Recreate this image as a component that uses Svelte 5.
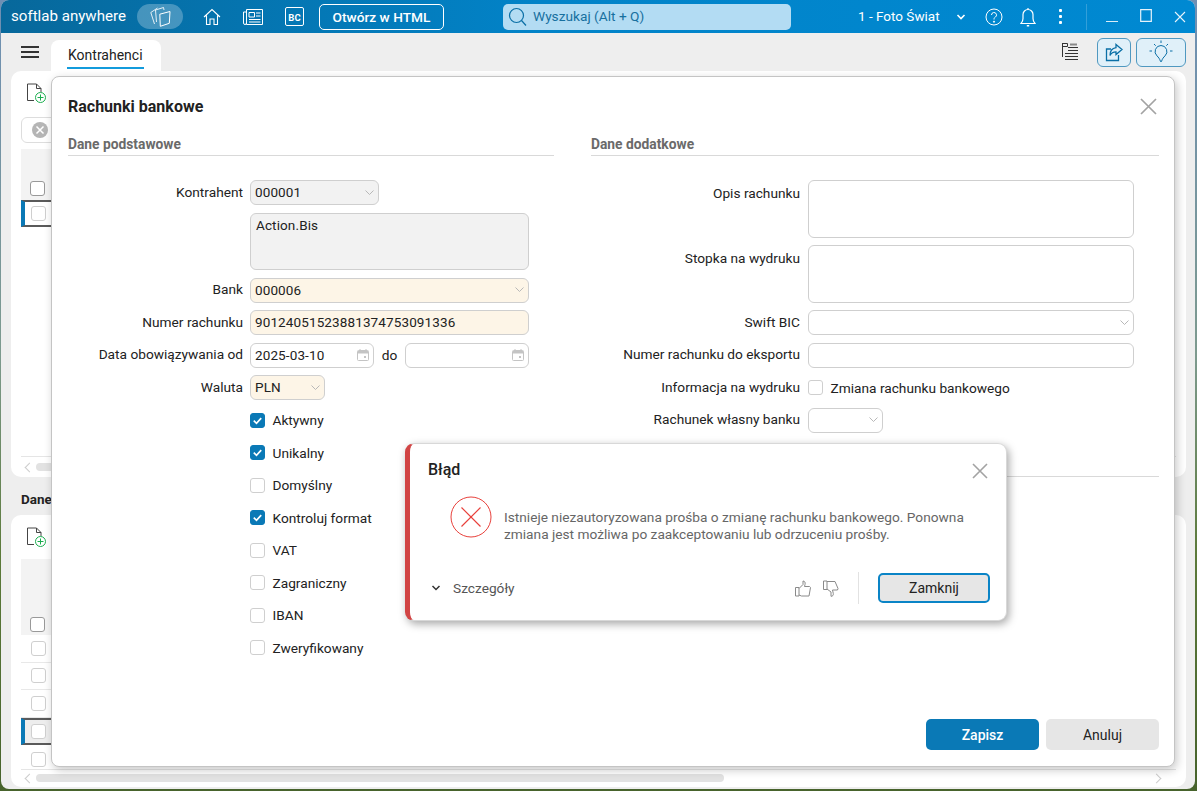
<script lang="ts">
    const checks = [
        { label: "Aktywny", checked: true },
        { label: "Unikalny", checked: true },
        { label: "Domyślny", checked: false },
        { label: "Kontroluj format", checked: true },
        { label: "VAT", checked: false },
        { label: "Zagraniczny", checked: false },
        { label: "IBAN", checked: false },
        { label: "Zweryfikowany", checked: false },
    ];
</script>

{#snippet chevron()}
    <svg class="chev" width="11" height="11" viewBox="0 0 11 11"><path d="M1.5 3.5 5.5 7.5 9.5 3.5" fill="none" stroke="#b8b8b8" /></svg>
{/snippet}

{#snippet calendar()}
    <svg class="cal" width="12" height="13" viewBox="0 0 12 13">
        <path d="M1.5 2.5h9a1 1 0 0 1 1 1v8a1 1 0 0 1-1 1h-9a1 1 0 0 1-1-1v-8a1 1 0 0 1 1-1Z" fill="none" stroke="#c4c4c4" />
        <path d="M1 3h10v2.500H1z" fill="#c4c4c4" />
        <path d="M3 1v2M9 1v2" stroke="#c4c4c4" />
        <rect x="7" y="8" width="2" height="2" fill="#c4c4c4" />
    </svg>
{/snippet}

{#snippet checkbox(checked: boolean)}
    <span class="box" class:checked>
        {#if checked}
            <svg width="13" height="13" viewBox="0 0 14 14"><path d="M3 7.200 5.900 10 11 4.400" fill="none" stroke="#fff" stroke-width="1.800" /></svg>
        {/if}
    </span>
{/snippet}

{#snippet addDoc()}
    <svg width="21" height="21" viewBox="0 0 21 21">
        <path d="M8 17.500H1.500V1h9l4.500 4.500V9M10.500 1v4.500H15" fill="none" stroke="#444" />
        <circle cx="14.500" cy="14.500" r="5" fill="#fff" stroke="#1aad4e" />
        <path d="M14.500 11.500v6M11.500 14.500h6" stroke="#1aad4e" />
    </svg>
{/snippet}

<div class="window">
    <header class="topbar">
        <span class="brand">softlab anywhere</span>
        <span class="pill">
            <svg width="21" height="21" viewBox="0 0 21 21" fill="none" stroke="#fff">
                <path d="M4.500 18 .8 6.500 7.500 2" stroke-opacity=".85" />
                <path d="M6.500 16 5.500 4 13.500 1.500l.5 2.500" stroke-opacity=".85" />
                <path d="M9.800 8.200 20 5.500l-.7 11.800-9 3Z" />
            </svg>
        </span>
        <svg class="nav home" width="18" height="18" viewBox="0 0 18 18" fill="none" stroke="#fff" stroke-width="1.100">
            <path d="M1 9 9 1.500 17 9M3.500 7.500V16.500H7V11h4v5.500h3.500V7.500" />
        </svg>
        <svg class="nav paper" width="20" height="16" viewBox="0 0 20 16" fill="none" stroke="#fff">
            <path d="M3.500.5h16v15H3.500ZM3.500 3H.5v11a1.500 1.500 0 0 0 3 0" />
            <path d="M6 3.500h5.500V8H6ZM13 4h4.500M13 7h4.500M6 10.500h11.500M6 13h11.500" />
        </svg>
        <span class="bc">BC</span>
        <button class="open">Otwórz w HTML</button>

        <div class="search">
            <svg width="19" height="20" viewBox="0 0 19 20" fill="none" stroke="#0a6fa6" stroke-width="1.200">
                <circle cx="8.500" cy="8.500" r="7" /><path d="M13.500 13.500 18 18.500" />
            </svg>
            <span class="search-text">Wyszukaj (Alt + Q)</span>
        </div>

        <span class="company">1 - Foto Świat</span>
        <svg class="comp-chev" width="10" height="8" viewBox="0 0 10 8"><path d="M1.500 2 5 5.500 8.500 2" fill="none" stroke="#fff" stroke-width="1.600" /></svg>
        <svg class="help" width="18" height="18" viewBox="0 0 18 18" fill="none" stroke="#fff">
            <circle cx="9" cy="9" r="8" />
            <path d="M6.500 7a2.500 2.500 0 1 1 3.700 2.200C9.300 9.800 9 10.300 9 11.500" />
            <circle cx="9" cy="13.700" r=".6" fill="#fff" />
        </svg>
        <svg class="bell" width="16" height="20" viewBox="0 0 16 20" fill="none" stroke="#fff" stroke-width="1.200">
            <path d="M1 16.500c1.500-1.500 2-2.500 2-5V7.500a5 5 0 0 1 10 0v4c0 2.500.5 3.500 2 5ZM8 1v1.500" />
            <path d="M6.800 18.800h2.400" stroke-width="1.400" />
        </svg>
        <span class="dots"><i></i><i></i><i></i></span>
        <span class="sep"></span>
        <svg class="winbtn min" width="12" height="12" viewBox="0 0 12 12"><path d="M0 10.500h12" stroke="#fff" stroke-opacity=".85" /></svg>
        <svg class="winbtn max" width="12" height="13" viewBox="0 0 12 13"><path d="M.7.700h10.600v11.600H.7Z" fill="none" stroke="#fff" stroke-opacity=".9" stroke-width="1.200" /></svg>
        <svg class="winbtn close" width="12" height="12" viewBox="0 0 12 12"><path d="M1 1l10 10M11 1 1 11" stroke="#fff" stroke-opacity=".9" stroke-width="1.100" /></svg>
    </header>

    <div class="tabs">
        <span class="burger"><i></i><i></i><i></i></span>
        <div class="tab"><span>Kontrahenci</span></div>
        <div class="tools">
            <svg class="list" width="18" height="20" viewBox="0 0 18 20" fill="none" stroke="#333">
                <path d="M1.500 1v14M1.500 1.500h5v3h-5" />
                <path d="M7 5.500h10M7 8.500h10M4 11.500h13M4 14.500h13M4 17.500h13" stroke-width="1.200" />
                <path d="M9 2.500h7" stroke="#888" stroke-width="2" />
            </svg>
            <button class="tool share" aria-label="Udostępnij">
                <svg width="18" height="19" viewBox="0 0 18 19" fill="none" stroke="#0a6fa6" stroke-width="1.300">
                    <path d="M13.500 12v5.500H1.500V6H6" />
                    <path d="M11 1.500 17 6.500l-6 5V8.800c-3 0-4.800 1.200-6 3.700 0-4.500 2-7.200 6-7.800Z" />
                </svg>
            </button>
            <button class="tool idea" aria-label="Motyw">
                <svg width="24" height="24" viewBox="0 0 24 24" fill="none" stroke="#0a6fa6">
                    <path d="M12 5.500a6 6 0 0 0-4 10.400c1.500 1.400 2.800 3 3.500 5.600h1c.7-2.600 2-4.200 3.500-5.600A6 6 0 0 0 12 5.500Z" />
                    <path d="M12 .5V3M3 11H.5M23.500 11H21M5 4l1.700 1.700M19 4l-1.700 1.700" />
                </svg>
            </button>
        </div>
    </div>

    <main class="content">
        <section class="card top">
            <div class="addrow">{@render addDoc()}</div>
            <div class="filter">
                <span class="clear"><svg width="10" height="10" viewBox="0 0 10 10"><path d="M1.500 1.500l7 7M8.500 1.500l-7 7" stroke="#fff" stroke-width="1.500" /></svg></span>
            </div>
            <div class="thead">{@render checkbox(false)}</div>
            <div class="trow active">{@render checkbox(false)}</div>
            <div class="hscroll first"><span class="arrow"></span><span class="thumb"></span></div>
        </section>
        <h3 class="dane">Dane</h3>
        <section class="card bottom">
            <div class="addrow">{@render addDoc()}</div>
            <div class="thead tall">{@render checkbox(false)}</div>
            <div class="trow">{@render checkbox(false)}</div>
            <div class="trow">{@render checkbox(false)}</div>
            <div class="trow">{@render checkbox(false)}</div>
            <div class="trow active grey">{@render checkbox(false)}</div>
            <div class="trow last">{@render checkbox(false)}</div>
            <div class="hscroll"><span class="arrow"></span><span class="thumb"></span><span class="arrow right"></span></div>
        </section>
    </main>

    <div class="modal">
        <div class="modal-head">
            <h2>Rachunki bankowe</h2>
            <svg width="17" height="17" viewBox="0 0 17 17"><path d="M1 1l15 15M16 1 1 16" stroke="#a3a3a3" stroke-width="1.700" /></svg>
        </div>
        <div class="columns">
            <section class="col left">
                <h4>Dane podstawowe</h4>
                <div class="form">
                    <label>Kontrahent</label>
                    <div class="field readonly w-129">000001 {@render chevron()}</div>

                    <span></span>
                    <div class="field readonly tall">Action.Bis</div>

                    <label>Bank</label>
                    <div class="field req">000006 {@render chevron()}</div>

                    <label>Numer rachunku</label>
                    <div class="field req">90124051523881374753091336</div>

                    <label>Data obowiązywania od</label>
                    <div class="dates">
                        <div class="field date">2025-03-10 {@render calendar()}</div>
                        <span class="do">do</span>
                        <div class="field date">{@render calendar()}</div>
                    </div>

                    <label>Waluta</label>
                    <div class="field req w-75">PLN {@render chevron()}</div>

                    {#each checks as item}
                        <span></span>
                        <div class="check">{@render checkbox(item.checked)}<span>{item.label}</span></div>
                    {/each}
                </div>
            </section>

            <section class="col right">
                <h4>Dane dodatkowe</h4>
                <div class="form wide">
                    <label class="top-label">Opis rachunku</label>
                    <div class="field tall"></div>

                    <label class="top-label">Stopka na wydruku</label>
                    <div class="field tall"></div>

                    <label>Swift BIC</label>
                    <div class="field">{@render chevron()}</div>

                    <label>Numer rachunku do eksportu</label>
                    <div class="field"></div>

                    <label>Informacja na wydruku</label>
                    <div class="check">{@render checkbox(false)}<span>Zmiana rachunku bankowego</span></div>

                    <label>Rachunek własny banku</label>
                    <div class="field w-75">{@render chevron()}</div>
                </div>
                <hr />
            </section>
        </div>
        <div class="actions">
            <button class="primary">Zapisz</button>
            <button class="secondary">Anuluj</button>
        </div>
    </div>

    <div class="error">
        <div class="error-head">
            <h3>Błąd</h3>
            <svg width="16" height="16" viewBox="0 0 16 16"><path d="M1 1l14 14M15 1 1 15" stroke="#a3a3a3" stroke-width="1.600" /></svg>
        </div>
        <div class="error-body">
            <svg width="42" height="42" viewBox="0 0 42 42" fill="none" stroke="#e8413c">
                <circle cx="21" cy="21" r="20" />
                <path d="M11.500 11.500l19 19M30.500 11.500l-19 19" stroke-width="1.200" />
            </svg>
            <p>Istnieje niezautoryzowana prośba o zmianę rachunku bankowego. Ponowna zmiana jest możliwa po zaakceptowaniu lub odrzuceniu prośby.</p>
        </div>
        <div class="error-foot">
            <svg class="more" width="10" height="8" viewBox="0 0 10 8"><path d="M1.500 2 5 5.500 8.500 2" fill="none" stroke="#333" stroke-width="1.500" /></svg>
            <span class="details">Szczegóły</span>
            <svg class="thumbs" width="16" height="17" viewBox="0 0 16 17" fill="none" stroke="#8a8a8a">
                <path d="M.5 7.500h3.500v8.500H.5ZM4 8.500 8 4.500V1c1.800 0 2.500 1.500 2 3.500L9.500 6.500h5.100l.9 1-1.500 8.500H6.500L4 15" />
            </svg>
            <svg class="thumbs down" width="16" height="17" viewBox="0 0 16 17" fill="none" stroke="#8a8a8a">
                <path d="M.5 1h3.500v8.500H.5ZM4 1.500h8L15 8.500l-.5 1.500H9.500l.8 3.500c.3 1.800-.7 2.800-2.300 2.800V12L4 9" />
            </svg>
            <span class="divider"></span>
            <button class="zamknij">Zamknij</button>
        </div>
    </div>
</div>

<style>
    :global(body) {
        margin: 0;
        height: 791px;
        overflow: hidden;
        background: linear-gradient(#6e8fb4 0, #7d9a8e 45%, #5c7a3a 70%, #47632c 100%);
        font-family: Roboto, "Liberation Sans", sans-serif;
        color: #222;
    }

    .window {
        position: relative;
        width: 1194px;
        height: 789px;
        margin-left: 1px;
        border-radius: 8px;
        overflow: hidden;
        background: #eeeeee;
        display: flex;
        flex-direction: column;
    }

    /* top bar */
    .topbar {
        height: 33px;
        flex: none;
        display: flex;
        align-items: center;
        background: linear-gradient(90deg, #07689b 0, #0283c8 45%, #0089d2 100%);
        color: #fff;
        box-sizing: border-box;
        padding-left: 10px;
    }

    .brand {
        font-size: 15.100px;
        width: 126px;
        white-space: nowrap;
        padding-bottom: 2px;
    }

    .pill {
        width: 46px;
        height: 25px;
        border-radius: 13px;
        background: rgba(255, 255, 255, 0.26);
        display: flex;
        align-items: center;
        justify-content: center;
    }

    .nav.home {
        margin-left: 20px;
    }

    .nav.paper {
        margin-left: 22px;
    }

    .bc {
        margin-left: 22px;
        width: 19px;
        height: 19px;
        box-sizing: border-box;
        border: 1px solid #fff;
        border-radius: 2px;
        font-size: 9.500px;
        font-weight: 700;
        display: flex;
        align-items: flex-end;
        justify-content: center;
        line-height: 15px;
    }

    .open {
        margin-left: 15px;
        width: 125px;
        height: 26px;
        border: 1px solid #fff;
        border-radius: 5px;
        background: transparent;
        color: #fff;
        font: 500 13.700px Roboto, sans-serif;
        padding: 0;
    }

    .search {
        margin-left: 59px;
        width: 288px;
        height: 26px;
        border-radius: 5px;
        background: #b3dcf3;
        color: #17709f;
        font-size: 13.700px;
        display: flex;
        align-items: center;
        gap: 6px;
        padding-left: 5px;
        box-sizing: border-box;
    }

    .search-text {
        padding-bottom: 2px;
    }

    .company {
        margin-left: 67px;
        font-size: 13.500px;
        width: 88px;
        white-space: nowrap;
        padding-bottom: 2px;
    }

    .comp-chev {
        margin-left: 10px;
    }

    .help {
        margin-left: 19px;
    }

    .bell {
        margin-left: 17px;
    }

    .dots {
        margin-left: 23px;
        display: flex;
        flex-direction: column;
        gap: 3px;
    }

    .dots i {
        width: 3px;
        height: 3px;
        background: #fff;
        display: block;
        border-radius: 1px;
    }

    .sep {
        margin-left: 24px;
        width: 1px;
        height: 26px;
        background: rgba(255, 255, 255, 0.2);
    }

    .winbtn.min {
        margin-left: 19px;
    }

    .winbtn.max {
        margin-left: 22px;
        margin-top: -3px;
    }

    .winbtn.close {
        margin-left: 22px;
    }

    /* tab strip */
    .tabs {
        height: 38px;
        flex: none;
        display: flex;
        align-items: flex-end;
        padding-left: 20px;
        box-sizing: border-box;
    }

    .burger {
        width: 18px;
        display: flex;
        flex-direction: column;
        gap: 3px;
        align-self: center;
    }

    .burger i {
        display: block;
        height: 2px;
        background: #333;
    }

    .tab {
        margin-left: 12px;
        width: 110px;
        height: 31px;
        background: #fff;
        border-radius: 8px 8px 0 0;
        box-sizing: border-box;
        padding: 7px 0 0 18px;
        font-size: 14px;
    }

    .tab span {
        display: inline-block;
        padding: 0 1px 3px;
        border-bottom: 2px solid #139bdc;
        margin-left: -2px;
        line-height: 17px;
    }

    .tools {
        margin-left: auto;
        display: flex;
        align-items: center;
        height: 38px;
        padding-right: 9px;
    }

    .tools .list {
        margin-right: 18px;
    }

    .tool {
        height: 29px;
        border: 1px solid #4f98c0;
        border-radius: 6px;
        background: #e0f0f9;
        padding: 0;
        display: flex;
        align-items: center;
        justify-content: center;
    }

    .tool.share {
        width: 34px;
    }

    .tool.idea {
        width: 50px;
        margin-left: 5px;
    }

    /* background page */
    .content {
        flex: 1;
        padding: 0 9px 2px 10px;
        display: flex;
        flex-direction: column;
        min-height: 0;
    }

    .card {
        background: #fff;
        border-radius: 10px;
        box-sizing: border-box;
        padding: 0 10px;
        display: flex;
        flex-direction: column;
    }

    .card.top {
        height: 406px;
        flex: none;
    }

    .card.bottom {
        flex: 1;
        min-height: 0;
    }

    .dane {
        margin: 0;
        height: 38px;
        flex: none;
        line-height: 44px;
        font-size: 13.500px;
        font-weight: 700;
        padding-left: 10px;
    }

    .addrow {
        height: 37px;
        flex: none;
        padding: 12px 0 0 5px;
        box-sizing: border-box;
    }

    .card.bottom .addrow {
        height: 44px;
    }

    .filter {
        height: 26px;
        flex: none;
        margin: 9px 2px 0 0;
        box-sizing: border-box;
        border: 1px solid #ddd;
        border-radius: 6px;
        display: flex;
        align-items: center;
        padding-left: 10px;
    }

    .clear {
        width: 16px;
        height: 16px;
        border-radius: 50%;
        background: #b5b5b5;
        display: flex;
        align-items: center;
        justify-content: center;
    }

    .thead {
        margin: 6px 2px 0 0;
        height: 51px;
        flex: none;
        box-sizing: border-box;
        background: #f3f3f3;
        display: flex;
        align-items: flex-end;
        padding: 0 0 4px 9px;
    }

    .thead.tall {
        margin-top: 0;
        height: 76px;
        padding-bottom: 3px;
    }

    .trow {
        height: 27.500px;
        flex: none;
        margin-right: 2px;
        display: flex;
        align-items: center;
        padding-left: 10px;
        border-bottom: 1px solid #e8e8e8;
        box-sizing: border-box;
    }

    .trow.active {
        border: 2px solid #5a5a5a;
        border-left: 4px solid #0a79b6;
        border-right: 0;
        height: 27px;
        padding-left: 6px;
    }

    .trow.grey {
        background: #ededed;
    }

    .trow.last {
        height: 24px;
        align-items: flex-start;
        padding-top: 7px;
        border-bottom: 0;
    }

    .hscroll {
        margin-top: auto;
        height: 20px;
        display: flex;
        align-items: center;
        gap: 3px;
        border-top: 1px solid #e5e5e5;
        padding-left: 5px;
    }

    .hscroll .arrow {
        width: 6px;
        height: 6px;
        border-left: 1px solid #ccc;
        border-bottom: 1px solid #ccc;
        transform: rotate(45deg);
    }

    .hscroll .arrow.right {
        margin-left: auto;
        margin-right: 16px;
        transform: rotate(225deg);
    }

    .hscroll .thumb {
        width: 688px;
        height: 8px;
        border-radius: 4px;
        background: #e2e2e2;
    }

    .hscroll.first .thumb {
        width: 30px;
    }

    .box {
        width: 15px;
        height: 15px;
        flex: none;
        box-sizing: border-box;
        border: 1px solid #cfcfcf;
        border-radius: 3px;
        background: #fff;
        display: flex;
        align-items: center;
        justify-content: center;
    }

    .thead .box {
        border-color: #999;
    }

    .box.checked {
        background: #0a79b6;
        border-color: #0a79b6;
    }

    /* modal */
    .modal {
        position: absolute;
        left: 50px;
        top: 76px;
        width: 1124px;
        height: 691px;
        box-sizing: border-box;
        background: #fff;
        border: 1px solid #c4c4c4;
        border-radius: 8px;
        box-shadow: 2px 3px 10px rgba(0, 0, 0, 0.22);
        padding: 0 15px 0 16px;
        display: flex;
        flex-direction: column;
        font-size: 13.700px;
    }

    .modal-head {
        height: 56px;
        display: flex;
        align-items: center;
        justify-content: space-between;
        padding: 3px 2px 0 0;
        box-sizing: border-box;
        flex: none;
    }

    .modal-head h2 {
        margin: 0;
        font-size: 16px;
        font-weight: 700;
    }

    .columns {
        flex: 1;
        display: flex;
        gap: 37px;
        min-height: 0;
    }

    .col.left {
        width: 486px;
        flex: none;
    }

    .col.right {
        flex: 1;
    }

    h4 {
        margin: 0;
        height: 22px;
        border-bottom: 1px solid #d9d9d9;
        font-size: 13.800px;
        font-weight: 700;
        line-height: 22px;
        color: #6a6a6a;
    }

    .form {
        margin-top: 24px;
        display: grid;
        grid-template-columns: 175px 279px;
        column-gap: 7px;
        row-gap: 7.500px;
        align-items: center;
    }

    .form.wide {
        grid-template-columns: 209px 326px;
        column-gap: 8px;
    }

    label {
        text-align: right;
        white-space: nowrap;
        color: #222;
        padding-bottom: 2px;
    }

    .top-label {
        align-self: start;
        padding: 5px 0 0;
    }

    .field {
        height: 25px;
        box-sizing: border-box;
        border: 1px solid #cfcfcf;
        border-radius: 6px;
        background: #fff;
        padding: 0 3px 1px 4px;
        display: flex;
        align-items: center;
        white-space: nowrap;
        font-size: 13.500px;
        letter-spacing: 0.120px;
    }

    .field svg {
        margin-left: auto;
    }

    .field.readonly {
        background: #f2f2f2;
    }

    .field.req {
        background: #fdf5e7;
    }

    .field.tall {
        height: 57.500px;
        align-items: flex-start;
        padding: 3px 5px;
    }

    .w-129 {
        width: 129px;
    }

    .w-75 {
        width: 75px;
    }

    .dates {
        display: flex;
        align-items: center;
    }

    .field.date {
        width: 124px;
        padding-right: 4px;
        flex: none;
    }

    .do {
        width: 31px;
        text-align: center;
    }

    .check {
        height: 25px;
        display: flex;
        align-items: center;
        gap: 7.500px;
    }

    .actions {
        flex: none;
        height: 64px;
        display: flex;
        justify-content: flex-end;
        gap: 7px;
        padding-top: 17px;
        box-sizing: border-box;
    }

    .actions button {
        width: 113px;
        height: 31px;
        border-radius: 5px;
        font: 500 14px Roboto, sans-serif;
        border: 0;
        padding: 0;
    }

    .primary {
        background: #0a79b6;
        color: #fff;
    }

    .actions .secondary {
        background: #e6e6e6;
        color: #222;
        font-weight: 400;
    }

    hr {
        margin: 43px 0 0;
        border: 0;
        border-top: 1px solid #d9d9d9;
    }

    /* error dialog */
    .error {
        position: absolute;
        left: 404px;
        top: 443px;
        width: 602px;
        height: 178px;
        box-sizing: border-box;
        background: #fff;
        border: 1px solid #d8d8d8;
        border-left: 5px solid #d14444;
        border-radius: 9px;
        box-shadow: 2px 3px 9px rgba(0, 0, 0, 0.35);
        padding: 0 16px 0 18px;
        display: flex;
        flex-direction: column;
        font-size: 13.700px;
    }

    .error-head {
        height: 51px;
        flex: none;
        display: flex;
        align-items: center;
        justify-content: space-between;
        padding: 1px 2px 0 0;
        box-sizing: border-box;
    }

    .error-head h3 {
        margin: -2px 0 0;
        font-size: 16px;
        font-weight: 500;
    }

    .error-head svg {
        margin-top: 1px;
    }

    .error-body {
        display: flex;
        align-items: flex-start;
        gap: 12px;
        margin-left: 22px;
        height: 46px;
        padding-top: 1px;
    }

    .error-body p {
        margin: 13px 0 0;
        color: #666;
        line-height: 17px;
        width: 480px;
    }

    .error-foot {
        margin-top: auto;
        height: 48px;
        display: flex;
        align-items: center;
        padding-bottom: 16px;
        box-sizing: border-box;
    }

    .more {
        margin-left: 3px;
    }

    .error-foot .details {
        margin-left: 12px;
        color: #555;
    }

    .thumbs {
        margin-left: 12px;
    }

    .error-foot .thumbs:not(.down) {
        margin-left: auto;
    }

    .divider {
        margin: 0 19px;
        width: 1px;
        height: 32px;
        background: #e2e2e2;
    }

    .zamknij {
        width: 112px;
        height: 30px;
        background: #e6e6e6;
        border: 2px solid #0a84c6;
        border-radius: 5px;
        color: #222;
        font: 400 14px Roboto, sans-serif;
        padding: 0;
    }
</style>
